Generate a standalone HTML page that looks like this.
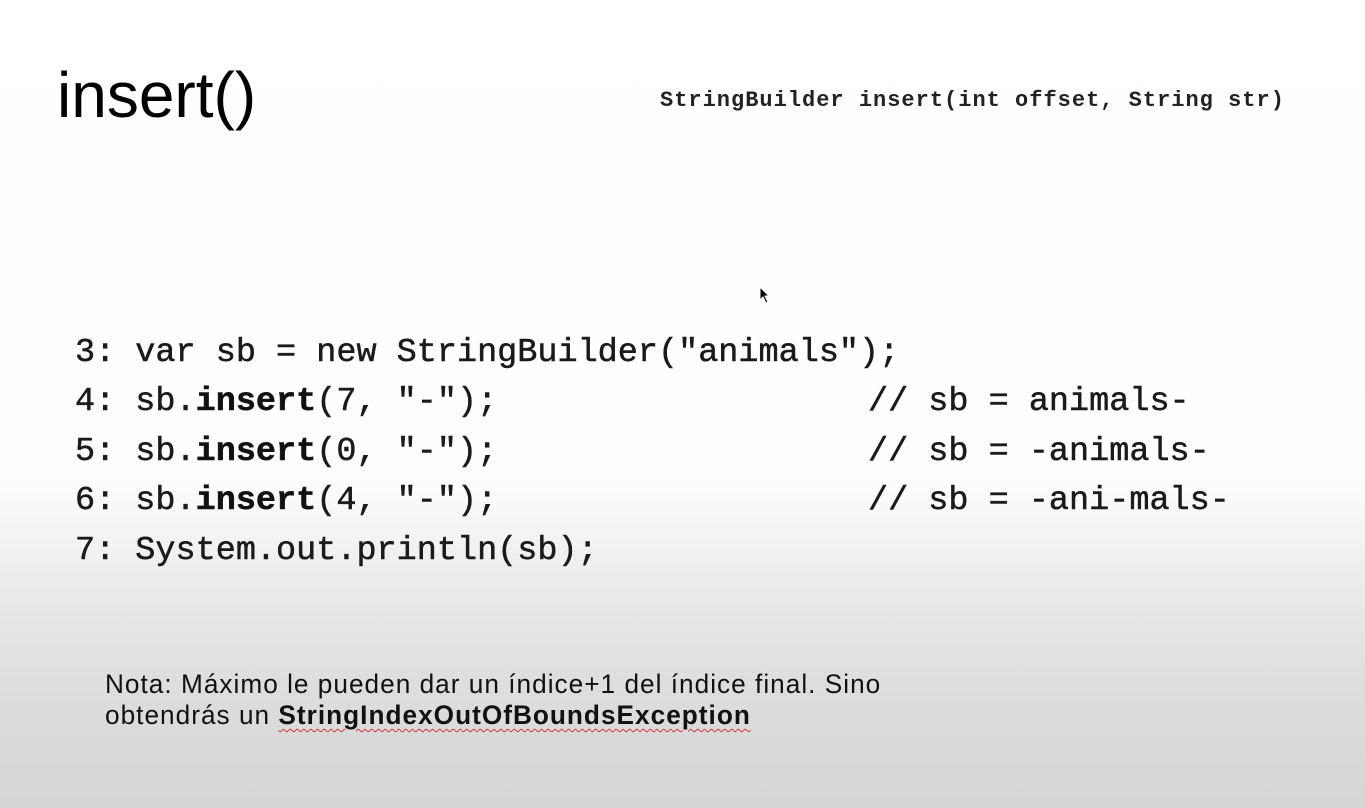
<!DOCTYPE html>
<html><head><meta charset="utf-8"><style>
body{margin:0;width:1365px;height:808px;overflow:hidden;position:relative;
background:linear-gradient(to bottom,#fff 0,#fdfdfd 480px,#ececec 580px,#dedede 680px,#d6d6d6 808px);
font-family:"Liberation Sans",sans-serif;color:#111}
.a{position:absolute;white-space:pre}
.t{left:57px;top:58px;font-size:64px;letter-spacing:0px;color:#000}
.s{left:660px;top:88px;font-family:"Liberation Mono",monospace;font-size:22px;letter-spacing:1px;font-weight:bold;color:#222}
.c{font-family:"Liberation Mono",monospace;font-size:33.5px;color:#1a1a1a;-webkit-text-stroke:0.5px #1a1a1a}
.c b{color:#111}
.n{left:105px;font-size:27px;color:#111;letter-spacing:1.05px;transform:scaleX(0.97);transform-origin:left}
u{text-decoration:underline wavy #d33;text-decoration-thickness:1px;text-underline-offset:4px}
</style></head><body>
<div class="a t">insert()</div>
<div class="a s">StringBuilder insert(int offset, String str)</div>
<div class="a c" style="left:75px;top:334px">3: var sb = new StringBuilder("animals");</div>
<div class="a c" style="left:75px;top:383px">4: sb.<b>insert</b>(7, "-");</div>
<div class="a c" style="left:75px;top:433px">5: sb.<b>insert</b>(0, "-");</div>
<div class="a c" style="left:75px;top:482px">6: sb.<b>insert</b>(4, "-");</div>
<div class="a c" style="left:75px;top:532px">7: System.out.println(sb);</div>
<div class="a c" style="left:868px;top:383px">// sb = animals-</div>
<div class="a c" style="left:868px;top:433px">// sb = -animals-</div>
<div class="a c" style="left:868px;top:482px">// sb = -ani-mals-</div>
<div class="a n" style="top:669px">Nota: Máximo le pueden dar un índice+1 del índice final. Sino</div>
<div class="a n" style="top:700px">obtendrás un <b><u>StringIndexOutOfBoundsException</u></b></div>
<svg class="a" style="left:759px;top:286px" width="12" height="18" viewBox="0 0 12 18"><path d="M1 1 L1 14 L4 11 L7 17 L9 16 L6 10 L10 10 Z" fill="#000" stroke="#fff" stroke-width="1"/></svg>
</body></html>
